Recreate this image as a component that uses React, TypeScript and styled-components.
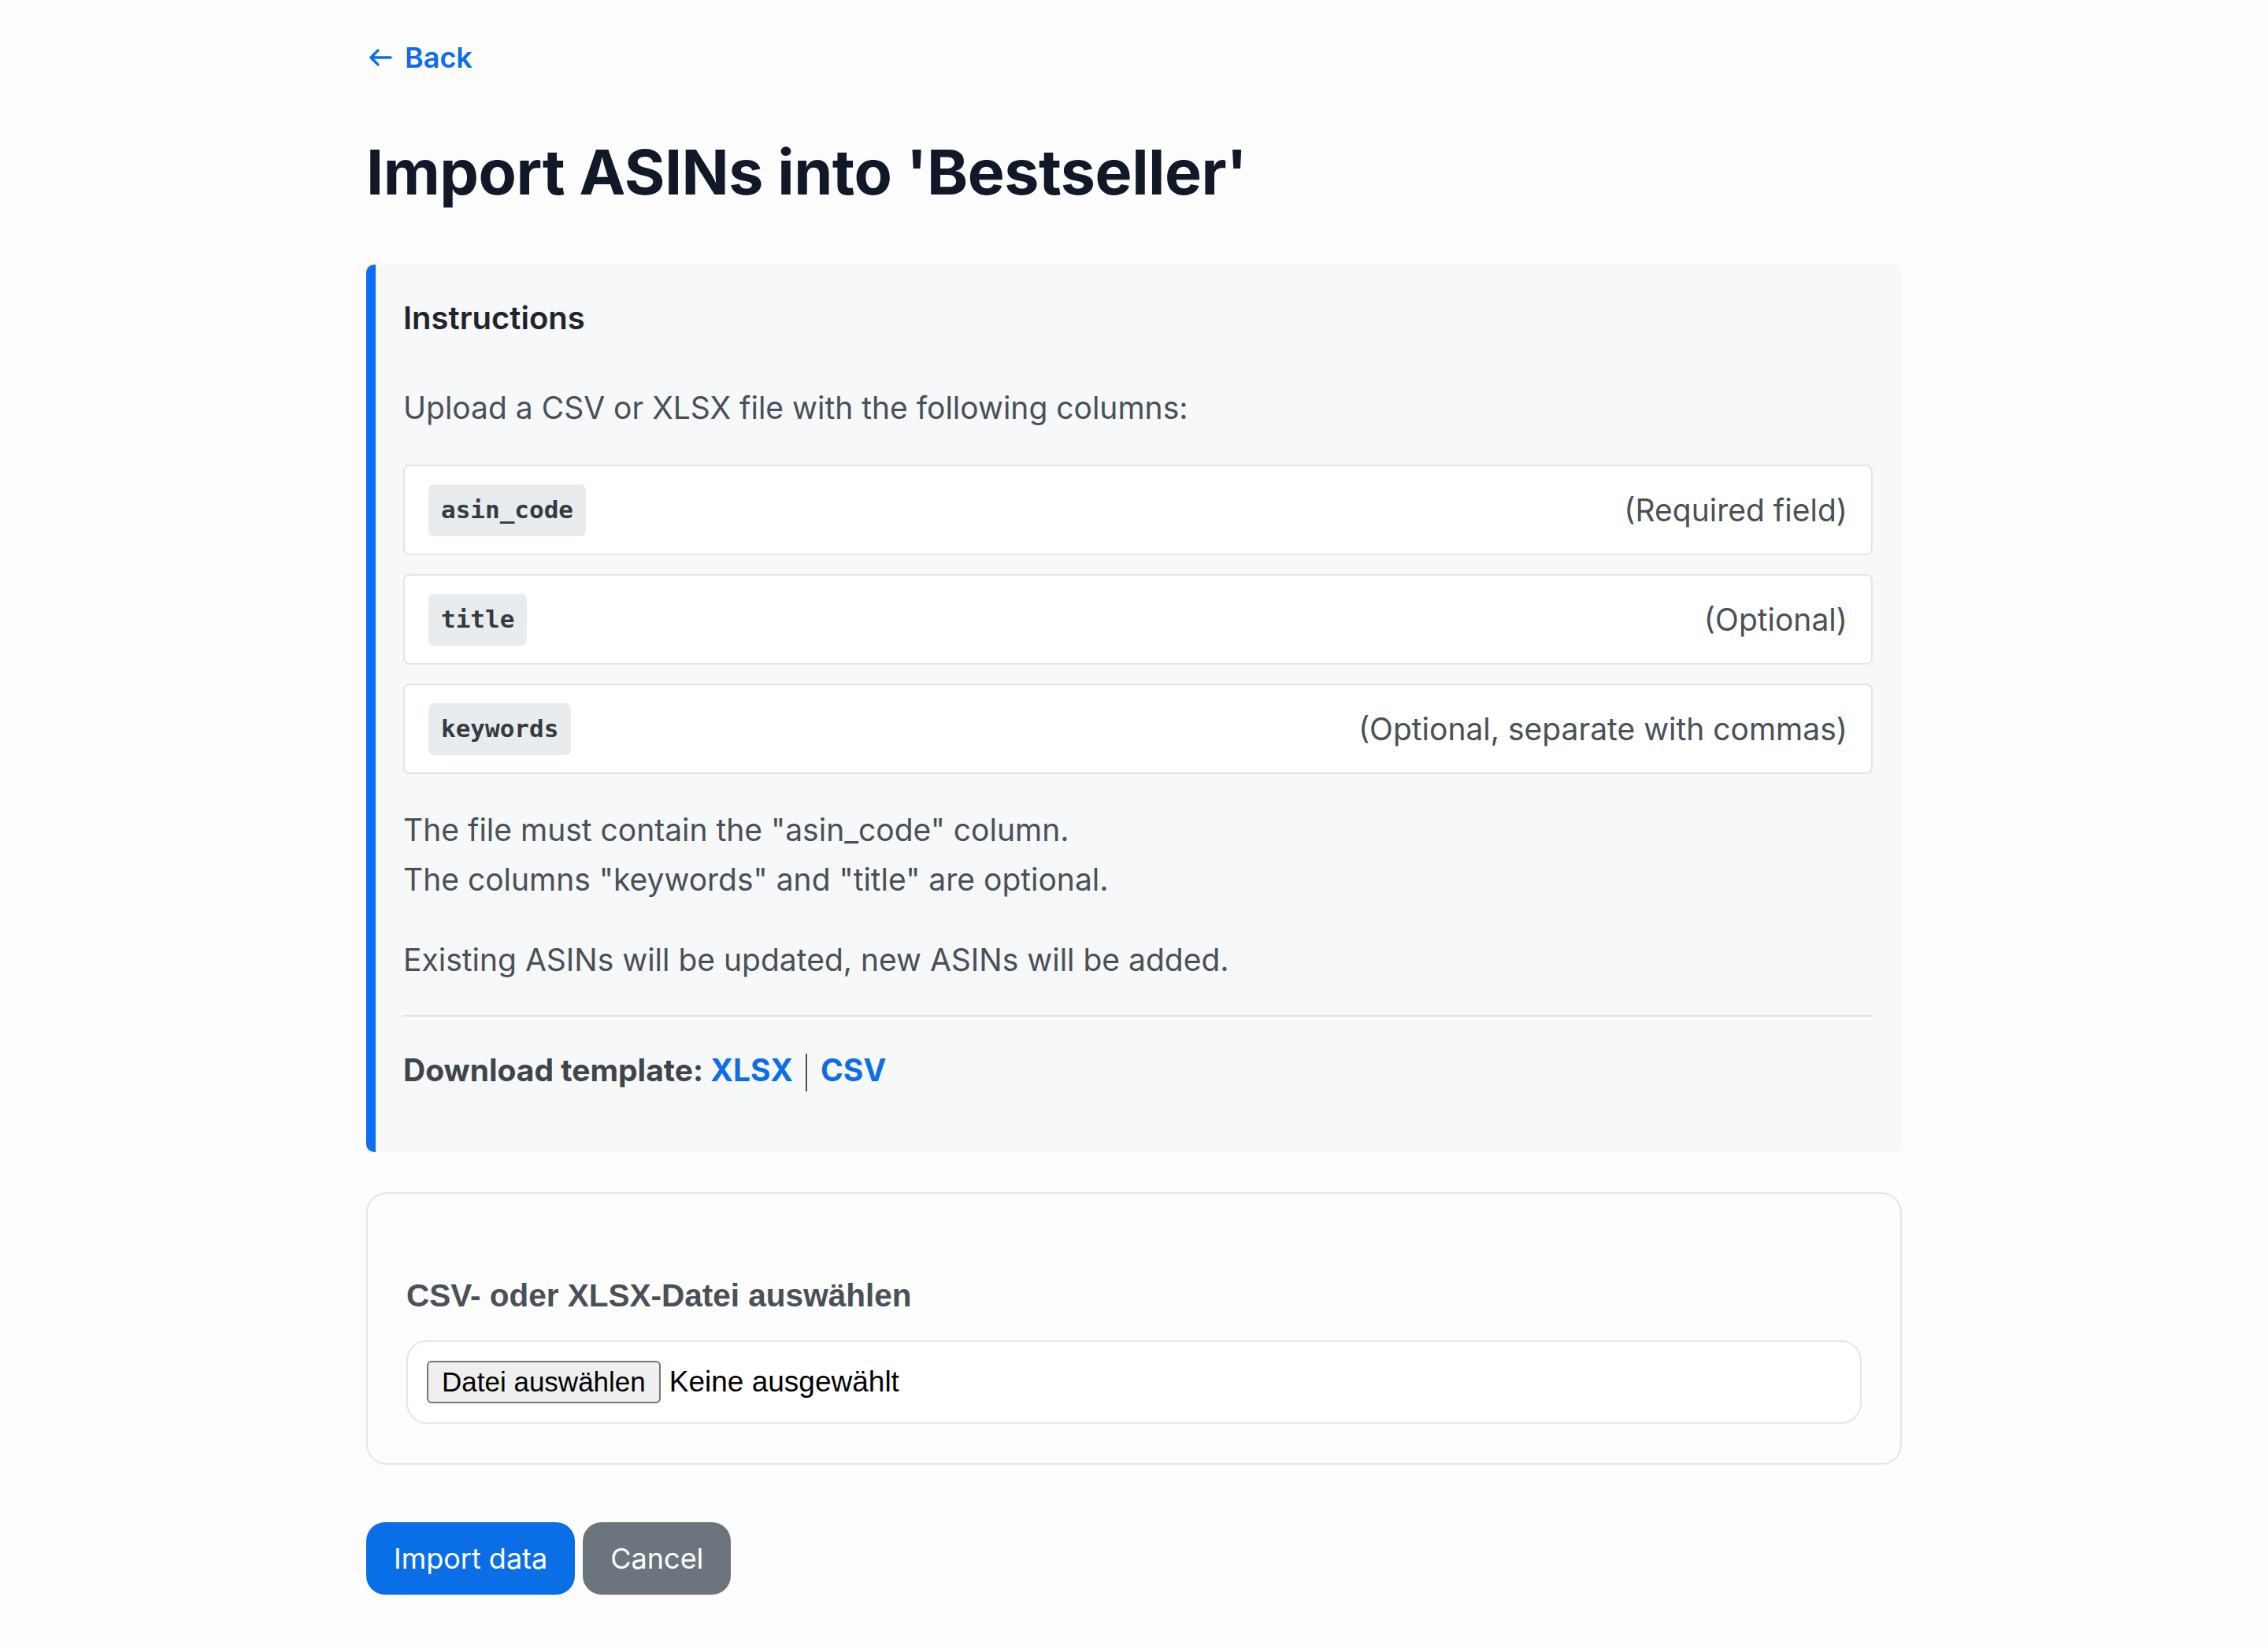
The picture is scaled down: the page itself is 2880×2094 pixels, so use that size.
import React from "react";
import styled, { createGlobalStyle } from "styled-components";

const GlobalStyle = createGlobalStyle`
  html, body {
    margin: 0;
    padding: 0;
    background: #fdfdfd;
  }
  body {
    font-family: Inter, "Noto Sans", sans-serif;
    color: #495057;
  }
`;

const columns = [
  { code: "asin_code", note: "(Required field)" },
  { code: "title", note: "(Optional)" },
  { code: "keywords", note: "(Optional, separate with commas)" },
];

const BackArrow: React.FC = () => (
  <svg width="30" height="24" viewBox="0 0 30 24" fill="none">
    <path
      d="M28 12H3M12 3L3 12L12 21"
      stroke="currentColor"
      strokeWidth="3.4"
      strokeLinecap="round"
      strokeLinejoin="round"
    />
  </svg>
);

const App: React.FC = () => {
  return (
    <>
      <GlobalStyle />
      <Page>
        <BackLink href="#">
          <BackArrow />
          Back
        </BackLink>
        <Title>Import ASINs into 'Bestseller'</Title>

        <InstructionsPanel>
          <PanelHeading>Instructions</PanelHeading>
          <Lead>Upload a CSV or XLSX file with the following columns:</Lead>
          <ColumnList>
            {columns.map((c) => (
              <ColumnRow key={c.code}>
                <Code>{c.code}</Code>
                <Note>{c.note}</Note>
              </ColumnRow>
            ))}
          </ColumnList>
          <TextBlock>
            The file must contain the "asin_code" column.
            <br />
            The columns "keywords" and "title" are optional.
          </TextBlock>
          <TextBlock>Existing ASINs will be updated, new ASINs will be added.</TextBlock>
          <Divider />
          <DownloadLine>
            Download template: <TemplateLink href="#">XLSX</TemplateLink>
            <Separator />
            <TemplateLink href="#">CSV</TemplateLink>
          </DownloadLine>
        </InstructionsPanel>

        <UploadCard>
          <FieldLabel>CSV- oder XLSX-Datei auswählen</FieldLabel>
          <FileField>
            <FileButton type="button">Datei auswählen</FileButton>
            <FileStatus>Keine ausgewählt</FileStatus>
          </FileField>
        </UploadCard>

        <Actions>
          <ActionButton $variant="primary">Import data</ActionButton>
          <ActionButton $variant="secondary">Cancel</ActionButton>
        </Actions>
      </Page>
    </>
  );
};

export default App;

const Page = styled.main`
  width: 1950px;
  margin: 0 auto;
  padding: 49px 0 60px;
  display: flex;
  flex-direction: column;
  align-items: flex-start;
`;

const BackLink = styled.a`
  display: flex;
  align-items: center;
  gap: 16px;
  font-size: 36px;
  line-height: 48px;
  font-weight: 600;
  color: #0d6ee6;
  text-decoration: none;
  padding-left: 3px;
`;

const Title = styled.h1`
  margin: 73px 0 70px;
  font-size: 79px;
  line-height: 96px;
  font-weight: 700;
  letter-spacing: -0.5px;
  color: #111827;
`;

const InstructionsPanel = styled.section`
  align-self: stretch;
  background: #f7f8fa;
  border-left: 12px solid #0d6ef4;
  border-radius: 10px;
  padding: 44px 37px 73px 35px;
`;

const PanelHeading = styled.h5`
  margin: 0 0 63px;
  font-size: 40px;
  line-height: 48px;
  font-weight: 600;
  color: #212529;
`;

const Lead = styled.p`
  margin: 0 0 45px;
  font-size: 39px;
  line-height: 54px;
`;

const ColumnList = styled.div`
  display: flex;
  flex-direction: column;
  gap: 24px;
  margin-bottom: 39px;
`;

const ColumnRow = styled.div`
  height: 115px;
  box-sizing: border-box;
  display: flex;
  align-items: center;
  justify-content: space-between;
  padding: 0 30px;
  background: #ffffff;
  border: 2px solid #e1e4e8;
  border-radius: 8px;
`;

const Code = styled.code`
  font-family: "DejaVu Sans Mono", "Liberation Mono", monospace;
  font-weight: 700;
  font-size: 31px;
  line-height: 37px;
  color: #343a40;
  background: #e9ecef;
  border-radius: 7px;
  padding: 14px 16px 15px;
`;

const Note = styled.span`
  font-size: 39px;
  line-height: 54px;
  color: #495057;
`;

const TextBlock = styled.p`
  margin: 0 0 39px;
  font-size: 39px;
  line-height: 63px;
`;

const Divider = styled.hr`
  margin: 0 0 36px;
  border: none;
  border-top: 2px solid #dfe2e6;
`;

const DownloadLine = styled.div`
  display: flex;
  align-items: center;
  font-size: 39px;
  line-height: 63px;
  font-weight: 700;
  color: #3f454b;
  white-space: pre;
`;

const TemplateLink = styled.a`
  color: #0d6ee6;
  text-decoration: none;
  font-weight: 700;
`;

const Separator = styled.span`
  display: inline-block;
  width: 2px;
  height: 48px;
  background: #495057;
  margin: 6px 17px 0 16px;
`;

const UploadCard = styled.section`
  align-self: stretch;
  margin-top: 51px;
  background: #fdfdfd;
  border: 2px solid #e4e6e8;
  border-radius: 26px;
  padding: 102px 49px 50px;
  display: flex;
  flex-direction: column;
  gap: 30px;
`;

const FieldLabel = styled.label`
  font-family: "Liberation Sans", Arial, sans-serif;
  font-weight: 700;
  font-size: 40.5px;
  line-height: 54px;
  color: #495057;
`;

const FileField = styled.div`
  height: 106px;
  box-sizing: border-box;
  display: flex;
  align-items: center;
  gap: 11px;
  padding: 0 24px;
  background: #ffffff;
  border: 2px solid #e4e6e8;
  border-radius: 26px;
`;

const FileButton = styled.button`
  height: 54px;
  padding: 0 17px;
  font-family: "Liberation Sans", Arial, sans-serif;
  font-size: 35px;
  color: #000;
  background: #efefef;
  border: 2px solid #767676;
  border-radius: 6px;
`;

const FileStatus = styled.span`
  font-family: "Liberation Sans", Arial, sans-serif;
  font-size: 37px;
  color: #000;
`;

const Actions = styled.div`
  margin-top: 73px;
  display: flex;
  gap: 10px;
`;

const ActionButton = styled.button<{ $variant: "primary" | "secondary" }>`
  height: 92px;
  padding: 0 35px;
  border: none;
  border-radius: 24px;
  font-family: Inter, sans-serif;
  font-size: 36px;
  color: #ffffff;
  background: ${(p) => (p.$variant === "primary" ? "#0a6ee6" : "#6c757d")};
`;
